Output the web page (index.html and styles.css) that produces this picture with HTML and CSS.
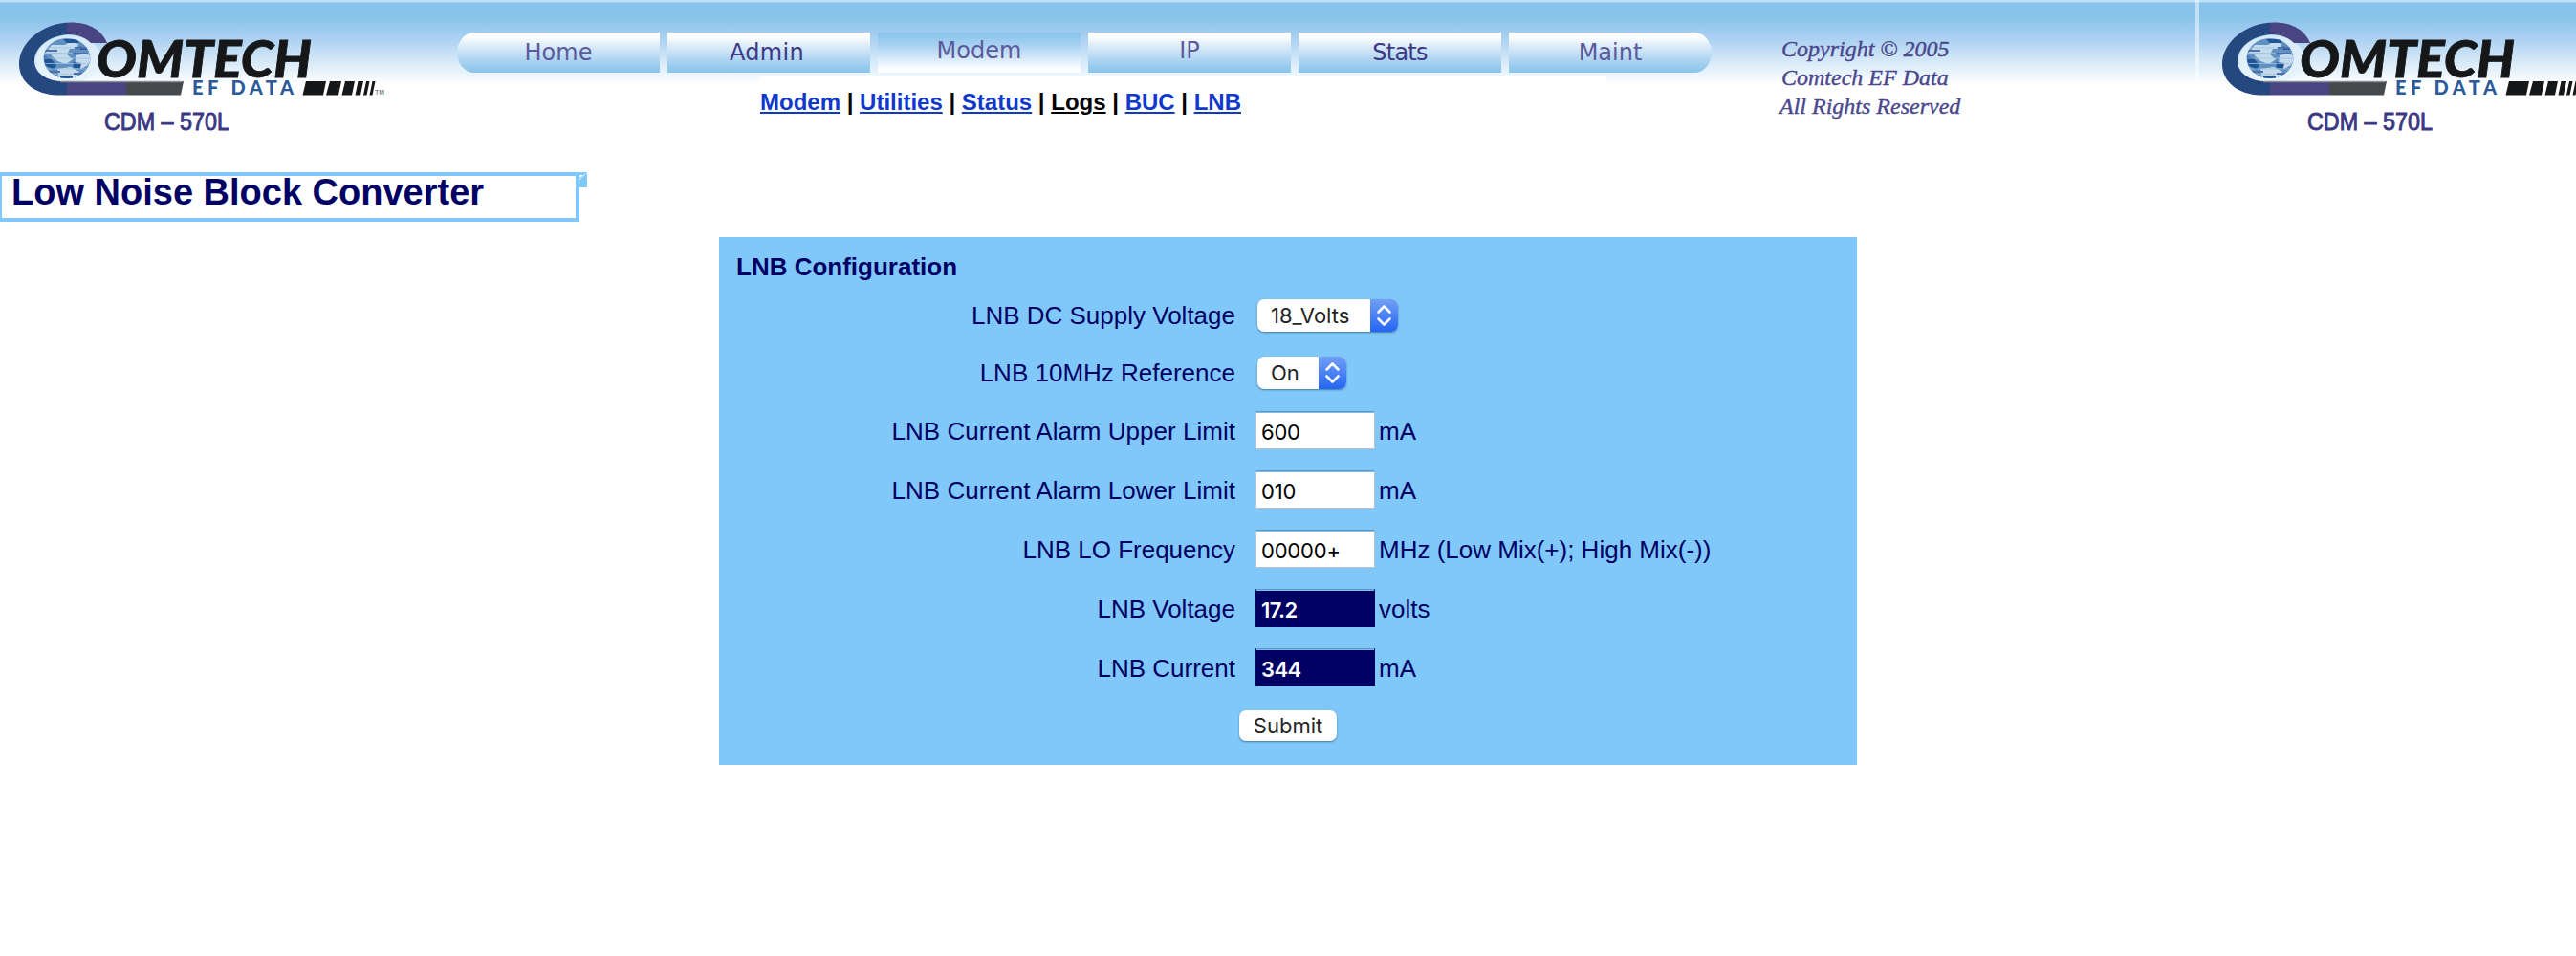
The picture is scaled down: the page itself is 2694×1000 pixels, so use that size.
FILE: index.html
```html
<!DOCTYPE html>
<html lang="en">
<head>
<meta charset="utf-8">
<title>CDM-570L</title>
<link rel="stylesheet" href="styles.css">
</head>
<body>
<svg class="defs" aria-hidden="true">
  <defs>
    <clipPath id="globe-clip"><ellipse cx="70" cy="61" rx="24.500" ry="21"/></clipPath>
    <linearGradient id="arc" gradientUnits="userSpaceOnUse" x1="0" y1="0" x2="192" y2="0">
      <stop offset="0.365" stop-color="#254881"/><stop offset="0.365" stop-color="#494582"/>
      <stop offset="0.688" stop-color="#494582"/><stop offset="0.688" stop-color="#45494c"/>
    </linearGradient>
  </defs>
  <symbol id="logo" viewBox="0 0 420 145">
    <ellipse cx="72" cy="62" rx="34" ry="25" fill="#e6f1fa" opacity="0.75"/>
    <path fill="url(#arc)" d="M112 45 H95 C87 37 78 36 70 36 C50 38 36 50 36 64 C36 75 47 84 63 85 H192 L189 99.500 H60 C36 99 20 85 20 67 C20 44 45 23.500 74 23.500 C94 23.500 107 32 112 45 Z"/>
    <path d="M63 85.500 H191" stroke="#8d8f98" stroke-width="1.500"/>
    <g clip-path="url(#globe-clip)">
      <rect x="44" y="38" width="54" height="48" fill="#5f92c3"/>
      <path d="M54 47 H68 L74 43 L82 46 L80 51 H73 L70 57 L76 62 L69 67 L60 64 L53 57 L47 56 Z M80 58 L90 55 L96 60 L92 68 L85 72 L79 67 Z M60 72 L74 70 L83 75 L78 83 H62 Z" fill="#c2dded"/>
      <path d="M66 41 H82 V45 H70 Z M46 59 L53 61 L59 68 L56 73 L47 68 Z M76 65 L85 66 L84 71 L77 71 Z M84 48 L92 52 H84 Z M63 80 H76 V83 H63 Z" fill="#1f5596"/>
      <path d="M44 50 H98 M44 55.500 H98 M44 61 H98 M44 66.500 H98 M44 72 H98 M44 77.500 H98" stroke="#a3bedb" stroke-width="1.200" opacity="0.8"/>
      <path d="M46 53 H60 M78 50 H92 M48 75 H63 M77 77 H91 M76 56 H92" stroke="#4f6fa9" stroke-width="2"/>
    </g>
    <text class="logo-name" x="101" y="80.500" textLength="225" lengthAdjust="spacingAndGlyphs">OMTECH</text>
    <text class="logo-sub" x="201" y="99" textLength="106">EF DATA</text>
    <path fill="#151719" d="M320 85 H341 L338 99.500 H316.500 Z M345 85 H357 L354 99.500 H341 Z M361 85 H371 L368 99.500 H357.500 Z M374.500 85 H380 L377 99.500 H371.500 Z M383 85 H386.500 L383.500 99.500 H380 Z M389.500 85 H392.500 L389.500 99.500 H386.500 Z"/>
    <text class="logo-tm" x="392" y="99" textLength="10" lengthAdjust="spacingAndGlyphs">TM</text>
    <text class="logo-model" x="109" y="136" textLength="131" lengthAdjust="spacingAndGlyphs">CDM – 570L</text>
  </symbol>
</svg>

<header class="banner">
  <svg class="logo"><use href="#logo" width="420" height="145"/></svg>
  <div class="menu">
    <nav class="tabs">
      <a class="tab first">Home</a>
      <a class="tab dark admin">Admin</a>
      <a class="tab active raised">Modem</a>
      <a class="tab raised">IP</a>
      <a class="tab dark stats">Stats</a>
      <a class="tab last">Maint</a>
    </nav>
    <nav class="subnav"><a>Modem</a> | <a>Utilities</a> | <a>Status</a> | <a class="visited">Logs</a> | <a>BUC</a> | <a>LNB</a></nav>
  </div>
  <p class="copyright"><span>Copyright © 2005</span><span>Comtech EF Data</span><span class="rights">All Rights Reserved</span></p>
  <div class="tile"><svg class="logo"><use href="#logo" width="420" height="145"/></svg></div>
</header>

<div class="title-row">
  <h1>Low Noise Block Converter</h1>
  <svg class="title-corner" viewBox="0 0 8 16"><path fill="#80c8f9" d="M0 0H8V16H0Z"/><path fill="#fff" d="M0 3H4L0 6Z"/><path d="M0 8L8 0" stroke="#d5edfd" stroke-width="1"/></svg>
</div>

<form class="panel">
  <h2>LNB Configuration</h2>
  <div class="row"><label>LNB DC Supply Voltage</label><span class="select volts"><span class="value">18_Volts</span><span class="arrows"><svg viewBox="0 0 29 34"><path d="M8.500 13.500L14.500 7.500L20.500 13.500M8.500 20.500L14.500 26.500L20.500 20.500"/></svg></span></span></div>
  <div class="row"><label>LNB 10MHz Reference</label><span class="select onoff"><span class="value">On</span><span class="arrows"><svg viewBox="0 0 29 34"><path d="M8.500 13.500L14.500 7.500L20.500 13.500M8.500 20.500L14.500 26.500L20.500 20.500"/></svg></span></span></div>
  <div class="row tall"><label class="long">LNB Current Alarm Upper Limit</label><span class="field">600</span><span>mA</span></div>
  <div class="row tall"><label class="long">LNB Current Alarm Lower Limit</label><span class="field">010</span><span>mA</span></div>
  <div class="row tall"><label>LNB LO Frequency</label><span class="field">00000+</span><span>MHz (Low Mix(+); High Mix(-))</span></div>
  <div class="row tall"><label>LNB Voltage</label><span class="field readonly">17.2</span><span>volts</span></div>
  <div class="row tall"><label>LNB Current</label><span class="field readonly">344</span><span>mA</span></div>
  <div class="actions"><button type="button">Submit</button></div>
</form>
</body>
</html>
```
FILE: styles.css
```css
* { box-sizing: border-box; }
body {
  margin: 0;
  background: #fff;
  color: #000064;
  font-family: "Liberation Sans", Arial, sans-serif;
  font-size: 26px;
  overflow: hidden;
}
.defs { display: block; width: 0; height: 0; }

.banner {
  display: flex;
  align-items: flex-start;
  height: 180px;
  background: linear-gradient(#bfe0f5 0 2px, #87c3ea 3px, #87c3ea 17px, #9ccaee 30px, #afd3f2 43px, #cfe5f7 60px, #e7f3fc 75px, #fff 88px);
}
.logo { display: block; flex: none; width: 420px; height: 145px; }
.logo-name { font: italic 900 54px Lato, sans-serif; fill: #151719; stroke: #151719; stroke-width: 0.8px; }
.logo-sub { font: 900 20px Lato, sans-serif; fill: #2b5a9b; }
.logo-tm { font: 8px "Liberation Sans", sans-serif; fill: #55585c; }
.logo-model { font: 25px "Liberation Sans", sans-serif; fill: #3a3783; stroke: #3a3783; stroke-width: 0.9px; }

.menu { flex: none; width: 1312px; margin-left: 58px; padding-top: 34px; }
.tabs { display: flex; gap: 8px; height: 46px; }
.tab {
  width: 212px;
  height: 42px;
  background: linear-gradient(#fff 0, #fbfdff 12%, #d3e7f8 40%, #a9d2f1 72%, #89c4eb 100%);
  color: #5c5a9d;
  font: 24px/43px "DejaVu Sans", sans-serif;
  text-align: center;
}
.tab.dark { color: #3d3985; }
.tab.raised { line-height: 39px; }
.tab.admin { padding-right: 4px; letter-spacing: 0.3px; }
.tab.active { background: linear-gradient(#89c4eb 0, #a5d0f1 30%, #d3e7f8 62%, #fbfdff 90%, #fff 100%); }
.tab.first { border-radius: 18px 0 0 18px / 21px 0 0 21px; }
.tab.last { border-radius: 0 18px 18px 0 / 0 21px 21px 0; }
.tab.stats { letter-spacing: -0.8px; }
.subnav {
  width: 886px;
  height: 60px;
  margin-left: 316px;
  padding-left: 1px;
  background: #fff;
  color: #000;
  font-weight: bold;
  font-size: 24px;
  line-height: 54px;
  white-space: pre;
}
.subnav a { color: #0f38cc; text-decoration: underline; }
.subnav a.visited { color: #000; }

.copyright {
  display: flex;
  flex-direction: column;
  flex: none;
  width: 442px;
  margin: 0;
  padding: 36px 0 0 73px;
  color: #4a478c;
  font: italic 24px/30px "Liberation Serif", serif;
  -webkit-text-stroke: 0.4px #4a478c;
}
.copyright .rights { margin-left: -2px; }
.tile {
  flex: none;
  width: 462px;
  height: 88px;
  margin-left: 64px;
  border-left: 4px solid #ffffff80;
  padding-left: 4px;
}

.title-row { display: flex; align-items: flex-start; height: 68px; }
h1 {
  width: 606px;
  height: 52px;
  margin: 0;
  padding-left: 10px;
  border: 4px solid #80c8f9;
  border-left-width: 2px;
  font-size: 38px;
  line-height: 34px;
  white-space: nowrap;
}
.title-corner { width: 8px; height: 16px; }

.panel {
  display: flex;
  flex-direction: column;
  width: 1190px;
  height: 552px;
  margin: 0 0 0 752px;
  background: #80c8f9;
}
h2 { height: 52px; margin: 0; padding: 5px 0 0 18px; font-size: 26px; line-height: 52px; }
.row { display: flex; align-items: center; height: 60px; white-space: pre; }
.row.tall { height: 62px; }
.row label { width: 540px; text-align: right; }
.row label.long { letter-spacing: 0.04px; }
.select {
  display: flex;
  height: 34px;
  margin-left: 23px;
  border-radius: 7px;
  overflow: hidden;
  background: #fff;
  box-shadow: 0 1px 2px #00305080;
  color: #242424;
  font: 22px/35px Inter, sans-serif;
}
.volts { width: 147px; }
.onoff { width: 93px; }
.value { flex: 1; padding-left: 14px; }
.arrows { width: 29px; background: linear-gradient(#719ff4, #2465f5); }
.arrows svg { display: block; width: 29px; height: 34px; fill: none; stroke: #fff; stroke-width: 2.6px; stroke-linecap: round; stroke-linejoin: round; }
.field {
  width: 125px;
  height: 40px;
  margin: 0 4px 2px 21px;
  padding-left: 5px;
  border: 1px solid #b9c0c6;
  border-top-color: #5c98c3;
  box-shadow: inset 0 1px #7fbde8;
  background: #fff;
  color: #000;
  font: 22px/42px Inter, sans-serif;
  letter-spacing: -0.2px;
}
.readonly { background: #000064; border-color: #000064; border-top-color: #5c98c3; color: #fff; font-weight: 600; letter-spacing: -0.6px; }
.actions { display: flex; justify-content: center; padding-top: 13px; }
button {
  width: 102px;
  height: 32px;
  padding: 0;
  border: 0;
  border-radius: 7px;
  background: #fff;
  box-shadow: 0 1px 2px #00305080;
  color: #242424;
  font: 22px/33px Inter, sans-serif;
}
```
